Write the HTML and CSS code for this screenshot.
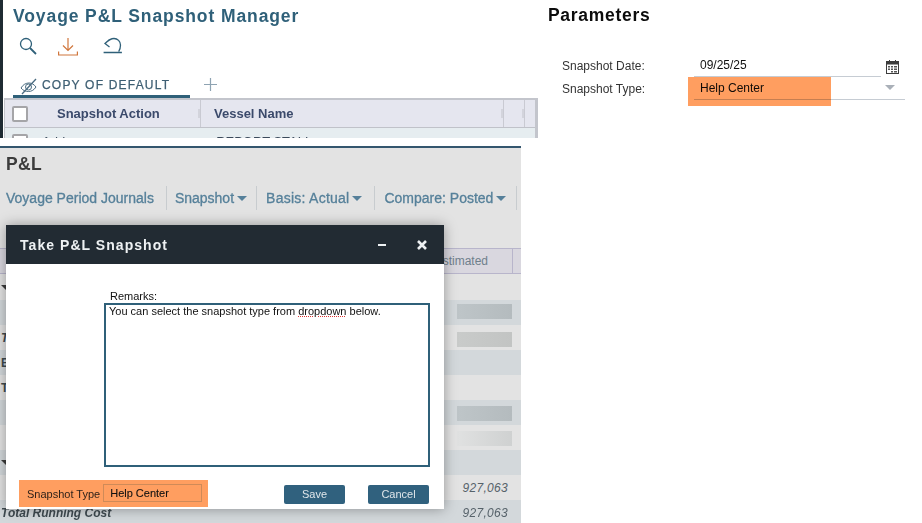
FILE: index.html
```html
<!DOCTYPE html>
<html lang="en">
<head>
<meta charset="utf-8">
<title>Voyage P&amp;L Snapshot</title>
<link rel="stylesheet" href="styles.css">
</head>
<body>
<section class="shot manager">
  <div class="manager-inner">
    <h1 class="manager-title">Voyage P&amp;L Snapshot Manager</h1>
    <div class="tools">
      <svg class="tool tool-search" width="18" height="18" viewBox="0 0 18 18" fill="none" stroke="#2f6079"><circle cx="7" cy="7" r="5.5" stroke-width="1.3"/><path d="M11 11l6 6" stroke-width="1.8"/></svg>
      <svg class="tool tool-down" width="20" height="20" viewBox="0 0 20 20" fill="none" stroke="#d0763c" stroke-width="1.2"><path d="M10 1v12M5 8.500l5 5 5-5M.6 14.500v3.500h18.800v-3.500"/></svg>
      <svg class="tool tool-undo" width="20" height="18" viewBox="0 0 20 18" fill="none" stroke="#2f6079" stroke-width="1.3"><path d="M2 6.500C5 3.500 8 1.500 11 1.500a6.500 6.500 0 0 1 6.500 6.500c0 3-.8 5-1.800 6.500M6.500 2.500L2 6.500l4.500 3.500M.6 15.500h18.300"/></svg>
    </div>
    <div class="tabs">
      <div class="tab">
        <svg width="18" height="17" viewBox="0 0 18 17" fill="none" stroke="#4a6b80" stroke-width="1"><path d="M1 10c2-3.500 5-5 8-5s5 1.500 7 4c-2 3-4.500 4.500-7.500 4.500S3 12.500 1 10z"/><circle cx="8.500" cy="9" r="3"/><path d="M16 1L2 16" stroke-width="1.300"/></svg>
        <span>COPY OF DEFAULT</span>
      </div>
      <svg class="tab-add" width="13" height="13" viewBox="0 0 13 13"><path d="M6.500 0v13M0 6.500h13" stroke="#8ea3b2" stroke-width="1.200"/></svg>
    </div>
    <div class="grid">
      <div class="grid-head">
        <div class="cell cell-check"><span class="check"></span></div>
        <div class="cell cell-action">Snapshot Action</div>
        <div class="cell cell-vessel">Vessel Name</div>
        <div class="cell cell-narrow"></div>
        <div class="cell cell-end"></div>
      </div>
      <div class="grid-row">
        <span class="check"></span>
        <span class="row-action">Add</span>
        <span class="row-vessel">REPORT STALL</span>
      </div>
    </div>
  </div>
</section>

<section class="shot params">
  <h2 class="params-title">Parameters</h2>
  <div class="param-form">
    <div class="param-row">
      <span class="param-label">Snapshot Date:</span>
      <span class="param-field field-date">09/25/25</span>
      <svg class="calendar" width="13" height="14" viewBox="0 0 13 14"><path d="M0 1h13v13H0z" fill="#3c3c3c"/><path d="M1 4.500h11V13H1z" fill="#fff"/><path d="M3 0h1v3H3zM9 0h1v3H9z" fill="#3c3c3c"/><path d="M2 6h2v1.500H2zM5 6h2v1.500H5zM8 6h3v1.500H8zM2 8.500h2V10H2zM5 8.500h2V10H5zM8 8.500h3V10H8zM5 11h2v1.500H5zM8 11h3v1.500H8z" fill="#555"/></svg>
    </div>
    <div class="param-row param-row-type">
      <span class="param-label">Snapshot Type:</span>
      <span class="param-field field-type">Help Center</span>
      <span class="type-caret"></span>
      <span class="type-mark"></span>
    </div>
  </div>
</section>

<section class="shot pnl">
  <h2 class="pnl-title">P&amp;L</h2>
  <nav class="pnl-nav">
    <span class="nav-item nav-journals">Voyage Period Journals</span>
    <span class="nav-item nav-snapshot">Snapshot<i class="caret"></i></span>
    <span class="nav-item nav-basis">Basis: Actual<i class="caret"></i></span>
    <span class="nav-item">Compare: Posted<i class="caret"></i></span>
  </nav>
  <div class="pnl-table">
    <div class="pnl-head"><span class="head-label">Estimated</span><span class="head-end"></span></div>
    <div class="pnl-row pnl-row-first light"><i class="twisty"></i></div>
    <div class="pnl-row dark"><span class="blur blur-dark bar-a"></span></div>
    <div class="pnl-row light"><em class="row-name">Total</em><span class="blur blur-light bar-b"></span></div>
    <div class="pnl-row dark"><span class="row-name">Expenses</span></div>
    <div class="pnl-row light"><span class="row-name">Total</span></div>
    <div class="pnl-row dark"><span class="blur blur-dark bar-c"></span></div>
    <div class="pnl-row light"><span class="blur blur-fade bar-c"></span></div>
    <div class="pnl-row dark"><i class="twisty"></i></div>
    <div class="pnl-row light"><em class="row-val">927,063</em></div>
    <div class="pnl-row dark"><em class="row-name">Total Running Cost</em><em class="row-val">927,063</em></div>
  </div>

  <div class="modal">
    <header class="modal-head">
      <span class="modal-title">Take P&amp;L Snapshot</span>
      <span class="modal-min"></span>
      <svg class="modal-close" width="10" height="10" viewBox="0 0 10 10"><path d="M1 1l8 8M9 1L1 9" stroke="#eef1f3" stroke-width="2.600"/></svg>
    </header>
    <div class="modal-body">
      <div class="remarks">
        <div class="remarks-label">Remarks:</div>
        <div class="remarks-box">You can select the snapshot type from <span class="spell">dropdown</span> below.</div>
      </div>
      <div class="modal-foot">
        <div class="type-pick">
          <span>Snapshot Type</span>
          <span class="type-input">Help Center</span>
        </div>
        <div class="actions">
          <button class="btn">Save</button>
          <button class="btn">Cancel</button>
        </div>
      </div>
    </div>
  </div>
</section>
</body>
</html>
```
FILE: styles.css
```css
* { box-sizing: border-box; }
html, body { margin: 0; padding: 0; }
body { width: 922px; height: 523px; background: #fff; position: relative; overflow: hidden; font-family: "Liberation Sans", Arial, sans-serif; }
.shot { position: absolute; overflow: hidden; }

.manager { left: 0; top: 0; width: 538px; height: 138px; border-left: 3px solid #1f2b33; }
.manager-inner { padding-left: 1px; }
.manager-title { margin: 0; padding: 7px 0 0 9px; height: 26px; font-size: 17.500px; line-height: 18px; font-weight: 700; letter-spacing: 0.9px; color: #2f6079; }
.tools { display: flex; height: 30px; margin-top: 9px; padding-left: 15px; align-items: flex-start; }
.tool-search { margin-top: 2px; }
.tool-down { margin-left: 21px; margin-top: 2px; }
.tool-undo { margin-left: 25px; margin-top: 2px; }
.tabs { display: flex; align-items: flex-start; height: 30px; margin-top: 11px; padding-left: 9px; }
.tab { width: 177px; height: 22px; display: flex; gap: 3px; padding: 2px 0 0 7px; border-bottom: 3px solid #2f6079; align-items: flex-start; font-size: 12px; line-height: 15px; letter-spacing: 1.2px; color: #3e5f73; -webkit-text-stroke: 0.25px #3e5f73; }
.tab svg { margin: 0 1px 0 0; }
.tab-add { margin: 2px 0 0 14px; }
.grid { margin-top: -8px; width: 534px; border: solid #c3c5cc; border-width: 2px 3px 0 1px; }
.grid-head { display: flex; height: 28px; background: #e5e6ef; border-bottom: 1px solid #c0c2c9; }
.cell { display: flex; align-items: center; position: relative; border-right: 1px solid #c9cad2; font-size: 13px; font-weight: 700; color: #3b4a6b; }
.cell::after { content: ""; position: absolute; right: 0; top: 9px; width: 2px; height: 9px; background: #d3d4dc; }
.cell-check { width: 50px; border-right: 0; padding-left: 7px; }
.cell-check::after, .cell-end::after { display: none; }
.cell-action { width: 146px; padding-left: 2px; }
.cell-vessel { width: 303px; padding-left: 13px; }
.cell-narrow { width: 21px; }
.cell-end { flex: 1; border-right: 0; }
.check { display: block; width: 16px; height: 16px; background: #fff; border: 2px solid #a5a5a8; border-radius: 2px; flex: none; }
.grid-row { height: 12px; background: #e6edf0; display: flex; align-items: flex-start; padding: 6px 0 0 7px; font-size: 13px; line-height: 15px; color: #3b4a5b; }
.row-action { margin-left: 14px; }
.row-vessel { margin-left: 151px; }

.params { left: 540px; top: 0; width: 382px; height: 120px; }
.params-title { margin: 0; padding: 6px 0 0 8px; height: 25px; font-size: 17.500px; line-height: 18px; font-weight: 700; letter-spacing: 0.7px; color: #0c0c0c; }
.param-form { padding: 33px 0 0 22px; }
.param-row { display: flex; height: 23px; position: relative; font-size: 12px; align-items: flex-start; color: #333; }
.param-label { width: 138px; line-height: 17px; }
.param-field { display: block; height: 19px; border-bottom: 1px solid #c6ccd3; padding-left: 6px; line-height: 15px; color: #111; }
.field-date { width: 187px; margin-left: -6px; }
.calendar { margin: 2px 0 0 5px; }
.param-row-type { height: 29px; }
.field-type { width: 211px; margin-left: -6px; }
.type-caret { position: absolute; left: 323px; top: 4px; border: solid transparent; border-width: 5px 5px 0; border-top-color: #aab0b8; }
.type-mark { position: absolute; left: 126px; top: -4px; width: 143px; height: 29px; background: #ff9e60; mix-blend-mode: multiply; }

.pnl { left: 0; top: 146px; width: 521px; height: 377px; background: #e3e3e3; border-top: 2px solid #34566e; }
.pnl-title { margin: 0; padding: 7px 0 0 6px; height: 25px; font-size: 17.500px; line-height: 18px; font-weight: 700; letter-spacing: 0.4px; color: #3c3c3c; }
.pnl-nav { display: flex; margin-top: 13px; height: 24px; padding-left: 6px; align-items: center; }
.nav-item { display: flex; align-items: center; height: 24px; padding-right: 10px; margin-right: 9px; border-right: 1px solid #c8cccf; font-size: 14px; color: #56809a; -webkit-text-stroke: 0.3px #56809a; white-space: nowrap; }
.nav-journals { padding-right: 12px; margin-right: 8px; }
.nav-snapshot { padding-right: 9px; }
.nav-basis { padding-right: 12px; letter-spacing: 0.25px; }
.caret { display: block; margin-left: 3px; border: solid transparent; border-width: 5px 5px 0; border-top-color: #56809a; }
.pnl-table { position: absolute; left: 0; top: 100px; width: 521px; }
.pnl-head { display: flex; height: 26px; background: #d9d7df; border: solid #b8b5cb; border-width: 1px 0; align-items: center; justify-content: flex-end; font-size: 12px; color: #6f7f8c; }
.head-label { width: 78px; margin-right: 9px; line-height: 22px; text-align: right; padding-right: 15px; }
.head-end { width: 9px; height: 100%; border-left: 1px solid #b8b5cb; }
.pnl-row { display: flex; align-items: center; height: 25px; position: relative; font-size: 12px; color: #444; }
.pnl-row-first { height: 26px; }
.pnl-row-first .twisty { top: 11px; }
.light { background: #e3e3e3; }
.dark { background: #d3d8db; }
.row-name { position: absolute; left: 1px; font-weight: 700; white-space: nowrap; color: #3f4a50; }
.row-val { position: absolute; right: 13px; letter-spacing: 0.3px; color: #56626a; }
.twisty { position: absolute; left: 1px; top: 10px; border: solid transparent; border-width: 5px 5px 0; border-top-color: #3c3c3c; }
.blur { position: absolute; left: 457px; width: 55px; height: 15px; }
.bar-a { top: 4px; }
.bar-b { top: 7px; }
.bar-c { top: 6px; }
.blur-dark { background: linear-gradient(90deg, #bec5c8, #b4bbbe); }
.blur-light { background: linear-gradient(90deg, #c9cbca, #c2c4c3); }
.blur-fade { background: linear-gradient(90deg, #e0e1e1, #cfd1d1); }

.modal { position: absolute; left: 6px; top: 77px; width: 438px; height: 284px; background: #fff; box-shadow: 0 0 12px rgba(0, 0, 0, 0.35); display: flex; flex-direction: column; }
.modal-head { display: flex; align-items: center; height: 39px; flex: none; padding-left: 14px; background: #222b33; }
.modal-title { flex: 1; font-size: 14px; font-weight: 700; letter-spacing: 1.05px; color: #eef1f3; }
.modal-min { width: 8px; height: 2px; background: #eef1f3; margin-right: 31px; }
.modal-close { margin-right: 17px; }
.modal-body { flex: 1; display: flex; flex-direction: column; }
.remarks { margin: 26px 0 0 98px; width: 326px; }
.remarks-label { padding-left: 6px; font-size: 11px; line-height: 13px; color: #111; }
.remarks-box { height: 164px; border: 2px solid #2f6079; padding-left: 3px; font-size: 11px; line-height: 13px; color: #111; }
.spell { text-decoration: underline dotted #d33 1px; }
.modal-foot { display: flex; margin: 13px 0 0 13px; align-items: flex-start; }
.type-pick { display: flex; align-items: center; width: 189px; height: 27px; padding-left: 8px; gap: 3px; background: #ff9e60; font-size: 11px; color: #2a1f18; }
.type-input { width: 99px; height: 18px; margin-top: -1px; border: 1px solid #cf8a58; padding-left: 6px; line-height: 16px; font-size: 11px; color: #111; -webkit-text-stroke: 0.1px #111; }
.actions { display: flex; gap: 23px; margin: 5px 0 0 76px; }
.btn { width: 61px; height: 19px; padding: 0 0 1px; border: 0; border-radius: 2px; background: #30617e; color: #dfe6ea; font: 400 11px "Liberation Sans", Arial, sans-serif; }
```
